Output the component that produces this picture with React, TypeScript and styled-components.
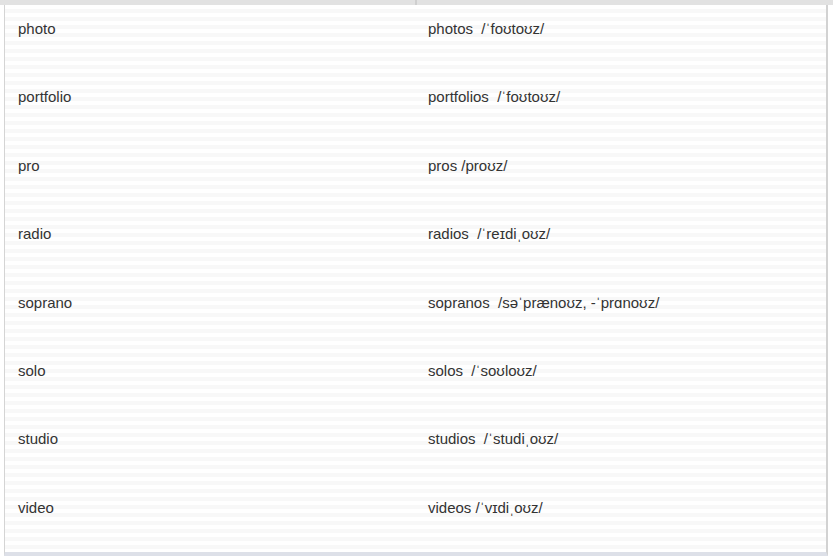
import React from "react";
import { styled, createGlobalStyle } from "styled-components";

const GlobalStyle = createGlobalStyle`
  html, body {
    margin: 0;
    padding: 0;
    background: #ffffff;
    font-family: "Liberation Sans", Arial, sans-serif;
  }
`;

const Page = styled.div`
  width: 833px;
  height: 559px;
  overflow: hidden;
  background: #ffffff;
`;

const HeaderBar = styled.div`
  display: grid;
  grid-template-columns: 415px 1fr;
  height: 5px;
  background: #e2e2e2;
`;

const HeaderCell = styled.div<{ $divider?: boolean }>`
  border-left: ${(p) => (p.$divider ? "2px solid #cfcfcf" : "none")};
`;

const Frame = styled.div`
  margin-left: 4px;
  width: 824px;
  border-left: 1px solid #d4d4d4;
  border-right: 2px solid #d2d2d2;
  border-bottom: 4px solid #dde0e8;
  box-sizing: border-box;
  background: repeating-linear-gradient(
    to bottom,
    #ffffff 0px,
    #ffffff 4px,
    #f8f8f8 4px,
    #f8f8f8 8px
  );
`;

const Row = styled.div`
  display: grid;
  grid-template-columns: 410px 1fr;
  height: 68.4px;
`;

const Cell = styled.div`
  padding: 15px 0 0 13px;
  font-size: 15px;
  line-height: 18px;
  color: #333333;
  white-space: pre;
`;

const words: [string, string][] = [
  ["photo", "photos  /ˈfoʊtoʊz/"],
  ["portfolio", "portfolios  /ˈfoʊtoʊz/"],
  ["pro", "pros /proʊz/"],
  ["radio", "radios  /ˈreɪdiˌoʊz/"],
  ["soprano", "sopranos  /səˈprænoʊz, -ˈprɑnoʊz/"],
  ["solo", "solos  /ˈsoʊloʊz/"],
  ["studio", "studios  /ˈstudiˌoʊz/"],
  ["video", "videos /ˈvɪdiˌoʊz/"],
];

const App: React.FC = () => {
  return (
    <Page>
      <GlobalStyle />
      <HeaderBar>
        <HeaderCell />
        <HeaderCell $divider />
      </HeaderBar>
      <Frame>
        {words.map(([singular, plural]) => (
          <Row key={singular}>
            <Cell>{singular}</Cell>
            <Cell>{plural}</Cell>
          </Row>
        ))}
      </Frame>
    </Page>
  );
};

export default App;
